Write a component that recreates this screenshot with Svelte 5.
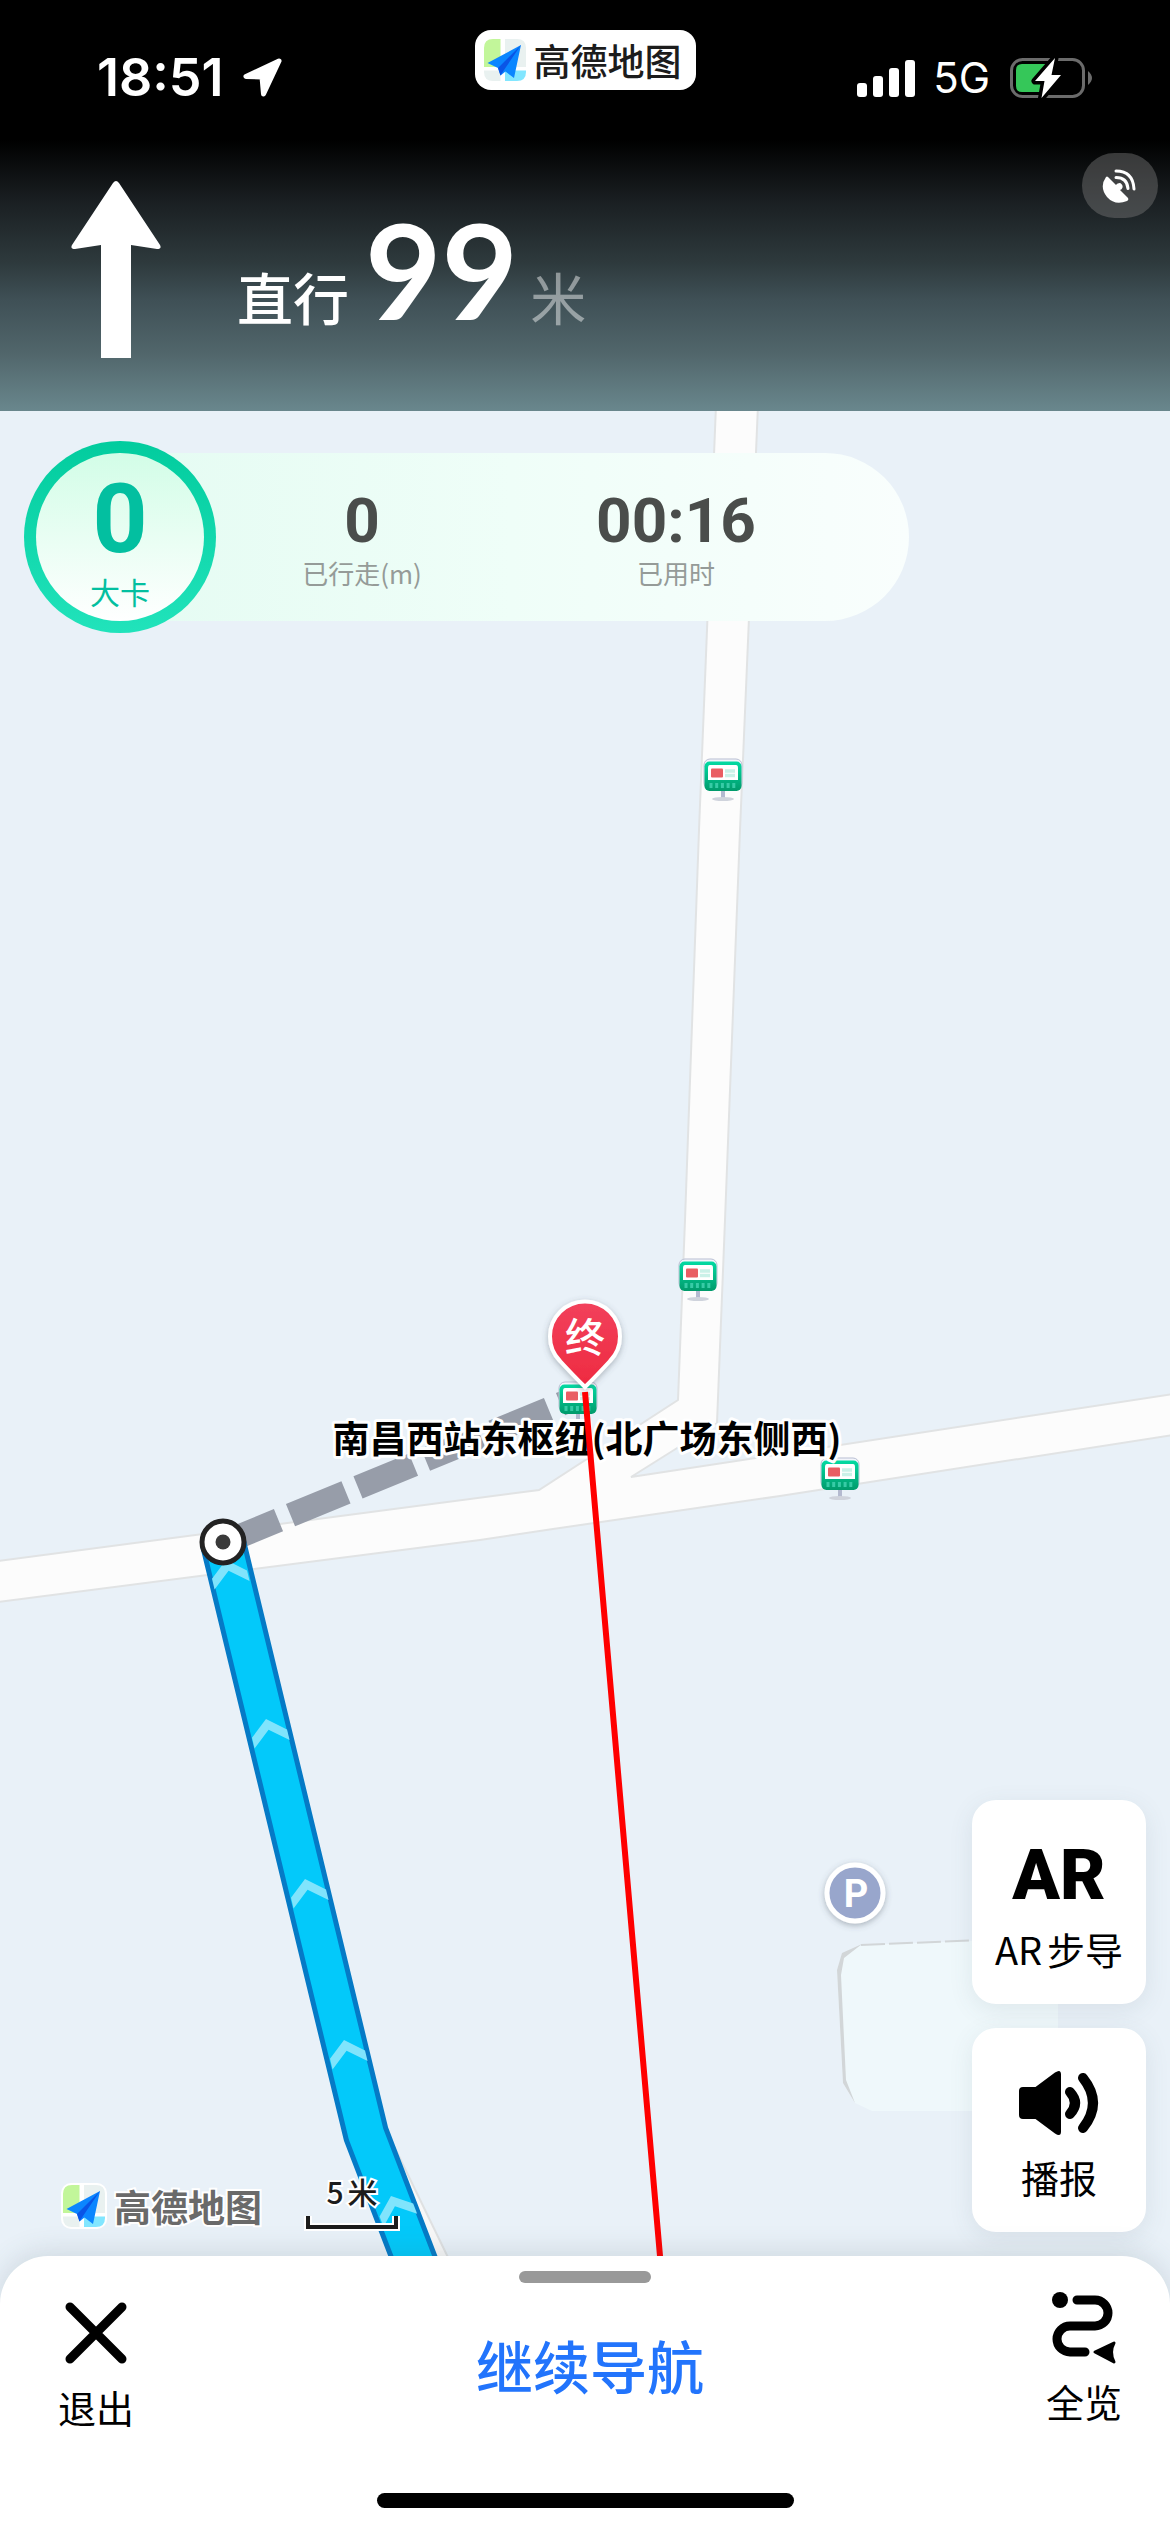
<script lang="ts">
	const signalBars = [
		{ x: 0, height: 14 },
		{ x: 16, height: 21 },
		{ x: 32, height: 29 },
		{ x: 48, height: 37 }
	];

	const stats = [
		{ value: '0', label: '已行走(m)' },
		{ value: '00:16', label: '已用时' }
	];

	// Map coordinates, top left corner of every stop sign
	const busStops = [
		{ x: 704, y: 759 },
		{ x: 679, y: 1259 },
		{ x: 559, y: 1382 },
		{ x: 821, y: 1458 }
	];

	// Direction marks along the route, angle follows the segment
	const chevrons = [
		{ x: 226, y: 1560, angle: -13.5 },
		{ x: 266, y: 1719, angle: -13.5 },
		{ x: 305, y: 1879, angle: -13.5 },
		{ x: 344, y: 2040, angle: -13.5 },
		{ x: 391, y: 2196, angle: -21 }
	];
</script>

{#snippet amapIcon()}
	<svg class="amap-icon" viewBox="0 0 46 46" aria-hidden="true">
		<rect width="46" height="46" rx="10" fill="#fff" />
		<path d="M11 2h7.500v28H2V11q0-9 9-9z" fill="#c2f69a" />
		<path d="M23 2h12q9 0 9 9v19H23z" fill="#e9f1f0" />
		<path d="M2 33.500h16.500V44H11q-9 0-9-9z" fill="#e9f1f0" />
		<path d="M23 33.500h21V35q0 9-9 9H23z" fill="#82e6ff" />
		<path d="M39 8 5.500 26 16 31l2.500 7.500 5-4L32 41z" fill="#0b86ff" />
		<path d="M39 8 16 31l2.500 7.500L22 33z" fill="#0a55e6" />
	</svg>
{/snippet}

<div class="screen">
	<header class="header">
		<div class="status">
			<div class="status-left">
				<span class="time">18:51</span>
				<svg class="location" viewBox="0 0 42 42" aria-hidden="true">
					<path
						d="M37 4 4 19.500 20 20l1.500 17z"
						fill="#fff"
						stroke="#fff"
						stroke-width="5"
						stroke-linejoin="round"
					/>
				</svg>
			</div>

			<div class="app-pill">
				{@render amapIcon()}
				<span>高德地图</span>
			</div>

			<div class="status-right">
				<svg class="signal" viewBox="0 0 58 38" aria-hidden="true">
					{#each signalBars as bar}
						<rect x={bar.x} y={38 - bar.height} width="10" height={bar.height} rx="3" fill="#fff" />
					{/each}
				</svg>
				<span class="network">5G</span>
				<svg class="battery" viewBox="0 0 86 44" aria-hidden="true">
					<rect x="3.500" y="3.500" width="72" height="37" rx="11" fill="none" stroke="#6b6b6b" stroke-width="3" />
					<path d="M80 15q8 7 0 14z" fill="#6b6b6b" />
					<path d="M14 8h27L32 36H14q-6 0-6-6V14q0-6 6-6z" fill="#35c759" />
					<path
						d="M47 2 27 25h9.500L33.500 42 53 19h-9.500z"
						fill="#fff"
						stroke="#000"
						stroke-width="7"
						stroke-linejoin="round"
						paint-order="stroke"
					/>
				</svg>
			</div>
		</div>

		<div class="guidance">
			<svg class="straight" viewBox="0 0 90 177" aria-hidden="true">
				<path
					d="M42 2q3-4 6 0l41 62q2 4-3 4l-26-4v113H30V64L4 68q-5 0-3-4z"
					fill="#fff"
				/>
			</svg>
			<p class="instruction">
				<span class="action">直行</span>
				<strong>99</strong>
				<span class="unit">米</span>
			</p>
			<button class="gps" aria-label="GPS">
				<svg viewBox="0 0 36 36" aria-hidden="true">
					<path d="M6 9 14 17a3.500 3.500 0 1 1 4 5l8 8q1 2-1 3-12 5-20-4-8-10-1-20 1-1 2 0z" fill="#fff" />
					<path
						d="M14 9.500q11 0 12 11M14 3q17 0 18 18"
						fill="none"
						stroke="#fff"
						stroke-width="3"
						stroke-linecap="round"
					/>
				</svg>
			</button>
		</div>
	</header>

	<main class="map">
		<svg class="canvas" viewBox="0 411 1170 1893" preserveAspectRatio="xMidYMid slice">
			<defs>
				<linearGradient id="stop-green" x1="0" y1="0" x2="0" y2="1">
					<stop offset="0" stop-color="#03dba3" />
					<stop offset="1" stop-color="#019a6b" />
				</linearGradient>
				<linearGradient id="pin-red" x1="0" y1="0" x2="0" y2="1">
					<stop offset="0" stop-color="#f2415c" />
					<stop offset="1" stop-color="#ee2a40" />
				</linearGradient>
				<filter id="soft" x="-30%" y="-30%" width="160%" height="160%">
					<feDropShadow dx="0" dy="2" stdDeviation="3" flood-color="#4b5560" flood-opacity="0.4" />
				</filter>
			</defs>

			<!-- building -->
			<path d="M862 1945 1000 1940h58v171H872l-17-8-12-20-6-113 5-15z" fill="#eff8fb" />
			<path d="M862 1944 842 1953l-5 17 6 113 12 20-9-23-5-105 3-17z" fill="#d2d6d8" />
			<path d="M861 1945 980 1940" stroke="#d2d6d8" stroke-width="2" stroke-dasharray="24 4" />

			<!-- roads -->
			<path
				d="M716 405 699 830 685 1220 678 1400 539 1490-10 1562V1603L480 1540 553 1529 780 1496 1180 1434V1393L631 1477 717 1423 725 1220 740 830 758 405z"
				fill="#fcfcfc"
				stroke="#e1e3e4"
				stroke-width="2"
			/>
			<path d="M394 2146 459 2280H400z" fill="#f8f8f8" stroke="#dfe1e2" stroke-width="2" />

			<path d="M223 1543 585 1394" stroke="#979da9" stroke-width="24" stroke-dasharray="60 13" />

			<!-- walking route -->
			<g fill="none" stroke-linecap="round" stroke-linejoin="round">
				<path d="M223 1543 366 2134 432 2306" stroke="#057ac6" stroke-width="46" />
				<path d="M223 1543 366 2134 432 2306" stroke="#03c9fa" stroke-width="36" />
			</g>
			{#each chevrons as mark}
				<path
					transform="translate({mark.x} {mark.y}) rotate({mark.angle})"
					d="M0 0 18 15V26L0 11-18 26V15z"
					fill="#80e4fc"
				/>
			{/each}
			<circle cx="223" cy="1542" r="21" fill="#fff" stroke="#232323" stroke-width="5" />
			<circle cx="223" cy="1542" r="7.500" fill="#3a3a3a" />

			{#each busStops as stop}
				<g transform="translate({stop.x} {stop.y})">
					<rect x="0" y="0" width="38" height="30" rx="6" fill="#f3f5fb" stroke="#b9bfd3" stroke-width="1" />
					<rect x="17" y="31" width="4" height="8" fill="#b4bad0" />
					<ellipse cx="19" cy="40" rx="11" ry="2" fill="#cfd3dc" />
					<rect x="0.500" y="2.500" width="37" height="29.500" rx="5" fill="url(#stop-green)" />
					<path d="M6 6h26q2 0 2 3v12H4V9q0-3 2-3z" fill="#fff" />
					<rect x="7" y="9.500" width="12" height="9" rx="1" fill="#e95e63" />
					<path d="M21 12h10M21 16.500h10" stroke="#caf1e8" stroke-width="3.500" />
					<path d="M5.500 26.500h28" stroke="#37cba6" stroke-width="5" stroke-dasharray="3 2.700" />
				</g>
			{/each}

			<g filter="url(#soft)">
				<path
					d="M585 1387Q571 1373 560 1361A35 35 0 1 1 610 1361Q599 1373 585 1387z"
					fill="url(#pin-red)"
					stroke="#fff"
					stroke-width="4"
				/>
			</g>
			<text class="pin-text" x="585" y="1352">终</text>
			<text class="place" x="587" y="1453">南昌西站东枢纽(北广场东侧西)</text>

			<path d="M585 1392 660 2256 664 2306" fill="none" stroke="#f00" stroke-width="6" />

			<g filter="url(#soft)">
				<circle cx="855" cy="1893" r="28" fill="#98a6cc" stroke="#fff" stroke-width="5" />
			</g>
			<text class="parking" x="856" y="1907">P</text>
		</svg>

		<section class="stats">
			<div class="calories">
				<strong>0</strong>
				<span>大卡</span>
			</div>
			{#each stats as stat}
				<div class="stat">
					<strong>{stat.value}</strong>
					<span>{stat.label}</span>
				</div>
			{/each}
		</section>

		<div class="map-footer">
			<div class="watermark">
				{@render amapIcon()}
				<span>高德地图</span>
			</div>
			<div class="scale">
				<span>5米</span>
				<svg viewBox="0 0 96 18" aria-hidden="true">
					<path d="M4 2v11h88V2" fill="none" stroke="#fff" stroke-width="8" />
					<path d="M4 2v11h88V2" fill="none" stroke="#1c1c1c" stroke-width="4" />
				</svg>
			</div>
			<div class="tools">
				<button class="tool">
					<strong>AR</strong>
					<span>AR步导</span>
				</button>
				<button class="tool">
					<svg viewBox="0 0 84 72" aria-hidden="true">
						<path
							d="M6 20h12.500L38 5.500q6-4 6 2v57q0 6-6 2L18.500 52H6q-4 0-4-4V24q0-4 4-4z"
							fill="#000"
						/>
						<path
							d="M53 25q10 11 0 22M66 11q20 25 0 50"
							fill="none"
							stroke="#000"
							stroke-width="10"
							stroke-linecap="round"
						/>
					</svg>
					<span>播报</span>
				</button>
			</div>
		</div>
	</main>

	<footer class="sheet">
		<div class="handle"></div>
		<div class="actions">
			<button class="side exit">
				<svg viewBox="0 0 76 76" aria-hidden="true">
					<path d="M12 12 64 64M64 12 12 64" stroke="#000" stroke-width="9" stroke-linecap="round" />
				</svg>
				<span>退出</span>
			</button>
			<button class="resume">继续导航</button>
			<button class="side overview">
				<svg viewBox="0 0 76 76" aria-hidden="true">
					<circle cx="14" cy="11" r="8" fill="#000" />
					<path
						d="M31 11h18a13 13 0 0 1 0 26H24a13 13 0 0 0 0 26h15"
						fill="none"
						stroke="#000"
						stroke-width="9"
						stroke-linecap="round"
					/>
					<path
						d="M49 63 68 54q-5 9 0 19z"
						fill="#000"
						stroke="#000"
						stroke-width="3"
						stroke-linejoin="round"
					/>
				</svg>
				<span>全览</span>
			</button>
		</div>
		<div class="home"></div>
	</footer>
</div>

<style>
	:global(body) {
		margin: 0;
	}

	.screen {
		display: flex;
		flex-direction: column;
		min-height: 100vh;
		background: #e9f1f8;
		font-family: 'Noto Sans CJK SC', sans-serif;
		color: #000;
		text-autospace: normal;
	}

	button {
		margin: 0;
		padding: 0;
		border: none;
		background: none;
		font: inherit;
		color: inherit;
		cursor: pointer;
	}

	svg {
		display: block;
		flex-shrink: 0;
	}

	.header {
		background: linear-gradient(
			#000 34%,
			#1a1f22 49%,
			#2e3a3d 64%,
			#3f5056 73%,
			#51666b 86%,
			#69878d
		);
		color: #fff;
	}

	/* status bar */
	.status {
		display: grid;
		grid-template-columns: 1fr auto 1fr;
		align-items: center;
		height: 96px;
		padding: 30px 76px 0;
	}

	.status-left,
	.status-right {
		display: flex;
		align-items: center;
	}

	.status-left {
		padding-left: 21px;
		gap: 18px;
	}

	.status-right {
		justify-content: flex-end;
		gap: 18px;
	}

	.time {
		font: 600 52px/60px Inter, sans-serif;
	}

	.location {
		width: 42px;
		height: 42px;
	}

	.app-pill {
		display: flex;
		align-items: center;
		align-self: start;
		gap: 6px;
		height: 60px;
		padding: 0 14px 0 7px;
		border-radius: 16px;
		background: #fff;
		color: #1c1c1c;
		font-size: 37px;
		font-weight: 500;
		line-height: 60px;
	}

	.amap-icon {
		width: 46px;
		height: 46px;
	}

	.signal {
		width: 58px;
		height: 38px;
	}

	.network {
		font: 400 42px/60px Inter, sans-serif;
	}

	.battery {
		width: 86px;
		height: 44px;
	}

	/* turn guidance */
	.guidance {
		display: flex;
		align-items: flex-start;
		padding: 27px 12px 53px 71px;
	}

	.straight {
		width: 90px;
		height: 177px;
		margin-top: 28px;
	}

	.instruction {
		display: flex;
		align-items: baseline;
		margin: 44px auto 0 76px;
		font-size: 56px;
		font-weight: 500;
		line-height: 72px;
	}

	.instruction strong {
		margin: 0 12px 0 16px;
		font: 700 132px/144px Lato, sans-serif;
	}

	.unit {
		font-weight: 400;
		opacity: 0.45;
	}

	.gps {
		display: flex;
		align-items: center;
		justify-content: center;
		width: 76px;
		height: 65px;
		border-radius: 33px;
		background: rgba(120, 120, 120, 0.45);
	}

	.gps svg {
		width: 36px;
		height: 36px;
	}

	/* map */
	.map {
		position: relative;
		display: flex;
		flex: 1;
		flex-direction: column;
		justify-content: space-between;
	}

	.canvas {
		position: absolute;
		top: 0;
		left: 0;
		width: 100%;
		height: calc(100% + 48px);
	}

	.canvas text {
		text-anchor: middle;
	}

	.pin-text {
		font-size: 40px;
		font-weight: 500;
		fill: #fff;
	}

	.place {
		font-size: 37px;
		font-weight: 700;
		fill: #000;
		stroke: #fff;
		stroke-width: 6px;
		stroke-linejoin: round;
		paint-order: stroke;
	}

	.parking {
		font: 700 38px Roboto, sans-serif;
		fill: #fff;
	}

	.stats {
		position: relative;
		display: flex;
		align-self: flex-start;
		height: 168px;
		margin: 42px 24px 0;
		padding-right: 76px;
		border-radius: 84px;
		background: linear-gradient(90deg, #e2fbf1, #effef8 55%, #f9fefd);
		text-align: center;
	}

	.calories,
	.stat {
		display: flex;
		flex-direction: column;
	}

	.calories {
		box-sizing: border-box;
		width: 192px;
		height: 192px;
		margin: -12px -11px 0 0;
		padding-top: 30px;
		gap: 18px;
		border: 12px solid transparent;
		border-radius: 50%;
		background:
			linear-gradient(#d2fde7, #fff) padding-box,
			linear-gradient(#02cc9e, #21e3bb) border-box;
		color: #03bfa0;
	}

	.calories strong {
		font: 700 96px/72px Roboto, sans-serif;
	}

	.calories span {
		font-size: 30px;
		line-height: 36px;
	}

	.stat {
		width: 314px;
		padding-top: 44px;
		gap: 10px;
	}

	.stat strong {
		color: #4a4d4b;
		font: 700 62px/48px Roboto, sans-serif;
	}

	.stat span {
		color: #959b98;
		font-size: 26px;
		line-height: 36px;
	}

	.map-footer {
		position: relative;
		display: flex;
		align-items: flex-end;
		padding: 0 24px 24px 61px;
	}

	.watermark {
		display: flex;
		align-items: center;
		gap: 7px;
		height: 52px;
		color: #6a6a6a;
		font-size: 37px;
		font-weight: 700;
		line-height: 52px;
	}

	.watermark span,
	.scale span {
		-webkit-text-stroke: 4px #fff;
		paint-order: stroke fill;
	}

	.scale {
		display: flex;
		flex-direction: column;
		align-items: center;
		margin-left: 42px;
		gap: 3px;
		color: #1c1c1c;
		font-size: 30px;
		font-weight: 500;
		line-height: 40px;
	}

	.scale svg {
		width: 96px;
		height: 18px;
	}

	.tools {
		display: flex;
		flex-direction: column;
		gap: 24px;
		margin-left: auto;
	}

	.tool {
		display: flex;
		flex-direction: column;
		align-items: center;
		box-sizing: border-box;
		width: 174px;
		height: 204px;
		padding-top: 39px;
		gap: 14px;
		border-radius: 24px;
		background: #fff;
		box-shadow: 0 6px 24px rgba(70, 90, 100, 0.1);
		font-size: 38px;
		line-height: 48px;
	}

	.tool strong {
		font: 900 70px/72px Roboto, sans-serif;
	}

	.tool svg {
		width: 84px;
		height: 72px;
	}

	/* bottom sheet */
	.sheet {
		position: relative;
		padding: 15px 0 24px;
		border-radius: 48px 48px 0 0;
		background: #fff;
		box-shadow: 0 -4px 28px rgba(70, 90, 100, 0.16);
	}

	.handle {
		width: 132px;
		height: 12px;
		margin: 0 auto;
		border-radius: 6px;
		background: #999;
	}

	.actions {
		display: flex;
		align-items: flex-start;
		justify-content: space-between;
		height: 150px;
		padding: 0 48px 0 58px;
	}

	.side {
		display: flex;
		flex-direction: column;
		align-items: center;
		gap: 12px;
		font-size: 38px;
		line-height: 48px;
	}

	.side svg {
		width: 76px;
		height: 76px;
	}

	.exit {
		padding-top: 12px;
	}

	.overview {
		padding-top: 6px;
	}

	.resume {
		padding-top: 48px;
		color: #2274fc;
		font-size: 57px;
		font-weight: 500;
		line-height: 66px;
	}

	.home {
		width: 417px;
		height: 15px;
		margin: 60px auto 0;
		border-radius: 8px;
		background: #000;
	}
</style>
